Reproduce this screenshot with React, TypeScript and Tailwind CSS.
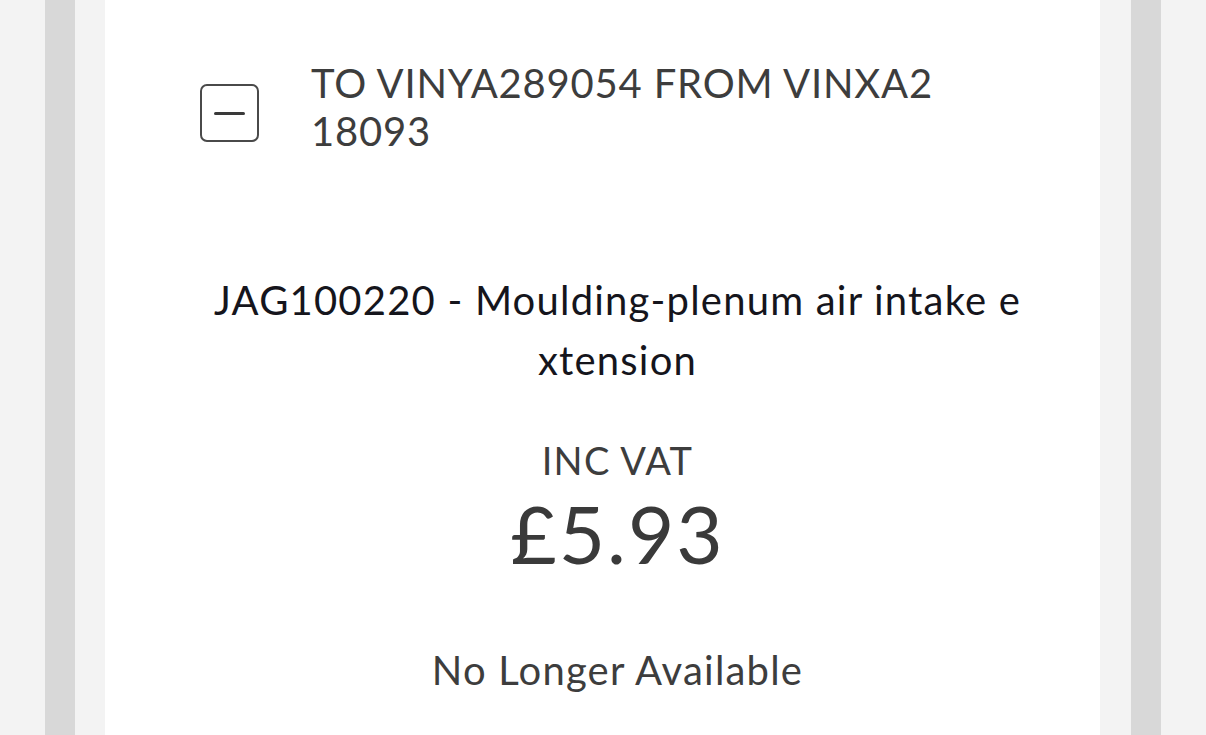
function MinusBox() {
  return (
    <div className="mt-[25px] w-[59px] h-[58px] shrink-0 rounded-[7px] border-[2.5px] border-[#4a4a4a] flex items-center justify-center">
      <div className="w-[31px] h-[3px] rounded-full bg-[#3a3a3a]" />
    </div>
  )
}

function App() {
  return (
    <div className="h-[735px] overflow-hidden flex bg-[#f3f3f3] font-['Lato',sans-serif]">
      <div className="w-[45px] shrink-0" />
      <div className="w-[30px] shrink-0 bg-[#d8d8d8]" />
      <div className="w-[30px] shrink-0" />

      <main className="w-[995px] shrink-0 bg-white pl-[95px] pr-[65px]">
        <div className="flex items-start gap-[52px] pt-[59px]">
          <MinusBox />
          <h2 className="w-[632px] break-all text-[40px] leading-[48px] tracking-[0.8px] text-[#3d3d3d]">
            TO VINYA289054 FROM VINXA218093
          </h2>
        </div>

        <div className="mt-[115px] flex flex-col items-center text-center">
          <h1 className="w-[818px] break-all text-[40px] leading-[60px] tracking-[1.2px] text-[#15151c]">
            JAG100220 - Moulding-plenum air intake extension
          </h1>
          <div className="mt-[48px] text-[38px] leading-[44px] tracking-[1.3px] text-[#3d3d3d]">
            INC VAT
          </div>
          <div className="mt-[6px] text-[80px] leading-[90px] tracking-[2px] text-[#3a3a3a]">£5.93</div>
          <div className="mt-[70px] text-[40px] leading-[44px] tracking-[1.2px] text-[#3d3d3d]">
            No Longer Available
          </div>
        </div>
      </main>

      <div className="w-[31px] shrink-0" />
      <div className="w-[30px] shrink-0 bg-[#d8d8d8]" />
      <div className="flex-1" />
    </div>
  )
}

export default App
